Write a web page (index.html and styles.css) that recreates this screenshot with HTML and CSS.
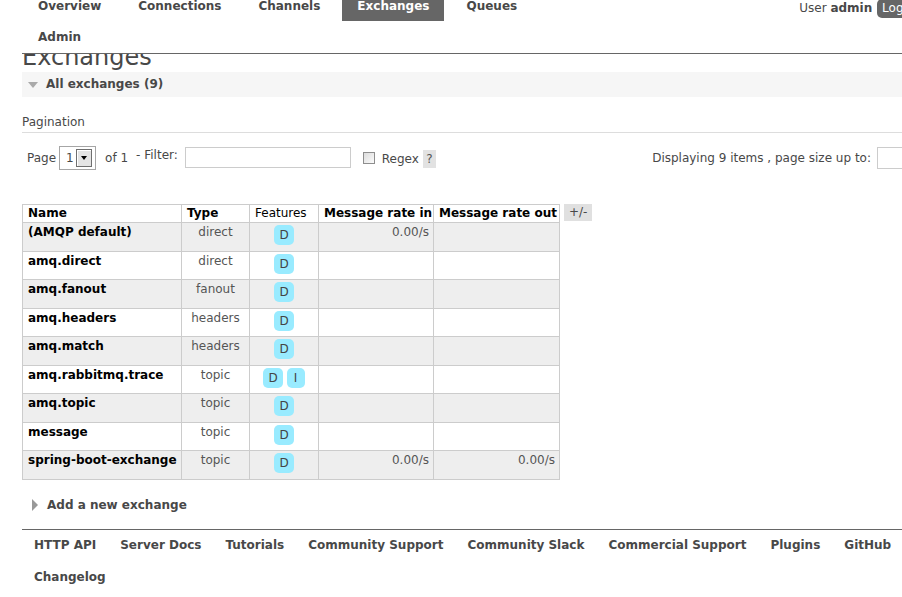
FILE: index.html
```html
<!DOCTYPE html>
<html lang="en">
<head>
<meta charset="utf-8">
<title>RabbitMQ Management: Exchanges</title>
<link rel="stylesheet" href="styles.css">
</head>
<body>
<div class="page">
  <header class="header">
    <nav class="menu">
      <a href="#">Overview</a>
      <a href="#">Connections</a>
      <a href="#">Channels</a>
      <a href="#" class="active">Exchanges</a>
      <a href="#">Queues</a>
      <a href="#">Admin</a>
    </nav>
    <div class="login">User <b>admin</b> <button class="logout" type="button">Log out</button></div>
  </header>

  <main class="main">
    <div class="title-clip"><h1 class="title">Exchanges</h1></div>

    <section class="section">
      <h2 class="section-head open"><span class="tri-down"></span>All exchanges (9)</h2>
      <div class="pagination-head">Pagination</div>
      <div class="pager">
        <span class="lbl">Page</span>
        <span class="select"><span class="select-val">1</span><span class="select-btn"><span class="select-arrow"></span></span></span>
        <span class="lbl of">of 1</span>
        <span class="lbl filter">- Filter:</span>
        <input class="filter-input" type="text">
        <input class="check" type="checkbox">
        <span class="lbl regex">Regex</span>
        <span class="help">?</span>
        <span class="pager-right">
          <span class="lbl">Displaying 9 items , page size up to:</span>
          <input class="size-input" type="text">
        </span>
      </div>

      <div class="table-wrap">
        <table class="list">
          <thead>
            <tr>
              <th class="c-name">Name</th>
              <th class="c-type">Type</th>
              <th class="c-feat">Features</th>
              <th class="c-in">Message rate in</th>
              <th class="c-out">Message rate out</th>
            </tr>
          </thead>
          <tbody>
            <tr class="alt"><td class="name">(AMQP default)</td><td class="type">direct</td><td class="feat"><abbr class="tag">D</abbr></td><td class="rate">0.00/s</td><td class="rate"></td></tr>
            <tr><td class="name">amq.direct</td><td class="type">direct</td><td class="feat"><abbr class="tag">D</abbr></td><td class="rate"></td><td class="rate"></td></tr>
            <tr class="alt"><td class="name">amq.fanout</td><td class="type">fanout</td><td class="feat"><abbr class="tag">D</abbr></td><td class="rate"></td><td class="rate"></td></tr>
            <tr><td class="name">amq.headers</td><td class="type">headers</td><td class="feat"><abbr class="tag">D</abbr></td><td class="rate"></td><td class="rate"></td></tr>
            <tr class="alt"><td class="name">amq.match</td><td class="type">headers</td><td class="feat"><abbr class="tag">D</abbr></td><td class="rate"></td><td class="rate"></td></tr>
            <tr><td class="name">amq.rabbitmq.trace</td><td class="type">topic</td><td class="feat"><abbr class="tag">D</abbr> <abbr class="tag">I</abbr></td><td class="rate"></td><td class="rate"></td></tr>
            <tr class="alt"><td class="name">amq.topic</td><td class="type">topic</td><td class="feat"><abbr class="tag">D</abbr></td><td class="rate"></td><td class="rate"></td></tr>
            <tr><td class="name">message</td><td class="type">topic</td><td class="feat"><abbr class="tag">D</abbr></td><td class="rate"></td><td class="rate"></td></tr>
            <tr class="alt"><td class="name">spring-boot-exchange</td><td class="type">topic</td><td class="feat"><abbr class="tag">D</abbr></td><td class="rate">0.00/s</td><td class="rate">0.00/s</td></tr>
          </tbody>
        </table>
        <span class="toggle">+/-</span>
      </div>
    </section>

    <h2 class="section-head closed"><span class="tri-right"></span>Add a new exchange</h2>
  </main>

  <footer class="footer">
    <a href="#">HTTP API</a>
    <a href="#">Server Docs</a>
    <a href="#">Tutorials</a>
    <a href="#">Community Support</a>
    <a href="#">Community Slack</a>
    <a href="#">Commercial Support</a>
    <a href="#">Plugins</a>
    <a href="#">GitHub</a>
    <a href="#">Changelog</a>
  </footer>
</div>
</body>
</html>
```

FILE: styles.css
```css
html, body {
  margin: 0;
  padding: 0;
  overflow: hidden;
  background: #fff;
}

body {
  font-family: "DejaVu Sans", Verdana, sans-serif;
  font-size: 12px;
  line-height: 15px;
  color: #484848;
}

.page {
  width: 910px;
  padding-left: 22px;
}

/* ---------- header ---------- */
.header {
  display: flex;
  justify-content: space-between;
  align-items: flex-start;
  margin-top: -8px;
  padding-bottom: 1px;
  border-bottom: 1px solid #666;
}

.menu {
  display: flex;
  flex-wrap: wrap;
  width: 560px;
  row-gap: 2px;
  column-gap: 7px;
  padding-left: 1px;
}

.menu a {
  display: block;
  padding: 7px 15px;
  font-weight: bold;
  color: #484848;
  text-decoration: none;
}

.menu a.active {
  background: #666;
  color: #fff;
}

.login {
  padding-top: 7px;
  white-space: nowrap;
}

.login b {
  font-weight: bold;
}

.logout {
  margin-left: 1px;
  padding: 2px 5px;
  border: 0;
  border-radius: 5px;
  background: #666;
  color: #fff;
  font: 12px/15px "DejaVu Sans", Verdana, sans-serif;
}

/* ---------- title ---------- */
.title-clip {
  height: 18px;
  overflow: hidden;
}

.title {
  margin: -11px 0 0 0;
  font-size: 24px;
  line-height: 28px;
  font-weight: normal;
  color: #484848;
}

/* ---------- section heads ---------- */
.section-head {
  display: flex;
  align-items: center;
  height: 25px;
  margin: 0;
  font-size: 12px;
  font-weight: bold;
  color: #484848;
}

.section-head.open {
  background: #f6f6f6;
  padding-left: 6px;
}

.section-head.closed {
  margin-top: 13px;
  padding-left: 10px;
}

.tri-down {
  width: 0;
  height: 0;
  margin-right: 8px;
  border-left: 5.5px solid transparent;
  border-right: 5.5px solid transparent;
  border-top: 6px solid #aaa;
}

.tri-right {
  width: 0;
  height: 0;
  margin-right: 9px;
  border-top: 6px solid transparent;
  border-bottom: 6px solid transparent;
  border-left: 6px solid #999;
}

/* ---------- pagination ---------- */
.pagination-head {
  margin-top: 18px;
  padding-bottom: 2px;
  border-bottom: 1px solid #ddd;
}

.pager {
  display: flex;
  align-items: center;
  height: 24px;
  margin-top: 13px;
  padding: 0 15px 0 5px;
}

.lbl {
  white-space: nowrap;
}

.select {
  box-sizing: border-box;
  display: flex;
  align-items: center;
  justify-content: space-between;
  width: 37px;
  height: 24px;
  margin-left: 3px;
  padding: 2px 3px 2px 6px;
  border: 1px solid #a6a6a6;
}

.select-btn {
  box-sizing: border-box;
  display: flex;
  align-items: center;
  justify-content: center;
  width: 16px;
  height: 18px;
  border: 1px solid #6f6f6f;
  box-shadow: inset 1px 1px 0 #fff;
  background: #e4e4e4;
}

.select-arrow {
  width: 0;
  height: 0;
  border-left: 3.5px solid transparent;
  border-right: 3.5px solid transparent;
  border-top: 4px solid #000;
}

.of {
  margin-left: 9px;
}

.filter {
  margin-left: 8px;
  align-self: flex-start;
  margin-top: 2px;
}

.filter-input {
  box-sizing: border-box;
  width: 166px;
  height: 21px;
  margin: 1px 0 0 7px;
  align-self: flex-start;
  border: 1px solid #ccc;
  padding: 0 3px;
}

.check {
  appearance: none;
  -webkit-appearance: none;
  box-sizing: border-box;
  width: 12px;
  height: 12px;
  margin: 0 0 0 12px;
  border: 1px solid #8e8e8e;
  background: linear-gradient(135deg, #dcdcdc, #fbfbfb);
}

.regex {
  margin-left: 7px;
  margin-top: 3px;
}

.help {
  display: flex;
  align-items: center;
  justify-content: center;
  width: 13px;
  height: 18px;
  margin: 2px 0 0 4px;
  background: #e2e2e2;
  color: #555;
}

.pager-right {
  display: flex;
  align-items: center;
  margin-left: auto;
}

.size-input {
  box-sizing: border-box;
  width: 40px;
  height: 22px;
  margin-left: 6px;
  border: 1px solid #ccc;
}

/* ---------- table ---------- */
.table-wrap {
  display: flex;
  align-items: flex-start;
  gap: 4px;
  margin-top: 34px;
}

.list {
  border-collapse: collapse;
  table-layout: fixed;
  width: 537px;
}

.list th,
.list td {
  border: 1px solid #ccc;
  white-space: nowrap;
  overflow: visible;
}

.list th {
  padding: 1px 5px;
  text-align: left;
  font-weight: bold;
  color: #000;
  background: #fff;
}

.list th.c-feat {
  font-weight: normal;
}

.c-name { width: 148px; }
.c-type { width: 57px; }
.c-feat { width: 58px; }
.c-in { width: 104px; }
.c-out { width: 115px; }

.list tbody tr {
  height: 28.5px;
}

.list tbody tr.alt {
  background: #eee;
}

.list td {
  padding: 2px 5px;
  vertical-align: top;
}

.list td.name {
  font-weight: bold;
  color: #000;
}

.list td.type {
  text-align: center;
  color: #555;
}

.list td.feat {
  text-align: center;
}

.list td.rate {
  text-align: right;
  color: #555;
  padding-right: 4px;
}

.tag {
  display: inline-block;
  box-sizing: border-box;
  min-width: 18px;
  padding: 0 5px;
  line-height: 20px;
  border-radius: 5px;
  background: #99ebff;
  color: #444;
  text-decoration: none;
  text-align: center;
}

.toggle {
  padding: 1px 5px;
  background: #e0e0e0;
  color: #484848;
  white-space: nowrap;
}

/* ---------- footer ---------- */
.footer {
  display: flex;
  flex-wrap: wrap;
  margin-top: 11px;
  border-top: 1px solid #666;
}

.footer a {
  display: block;
  padding: 8.5px 12px;
  font-weight: bold;
  color: #484848;
  text-decoration: none;
  white-space: nowrap;
}
```
